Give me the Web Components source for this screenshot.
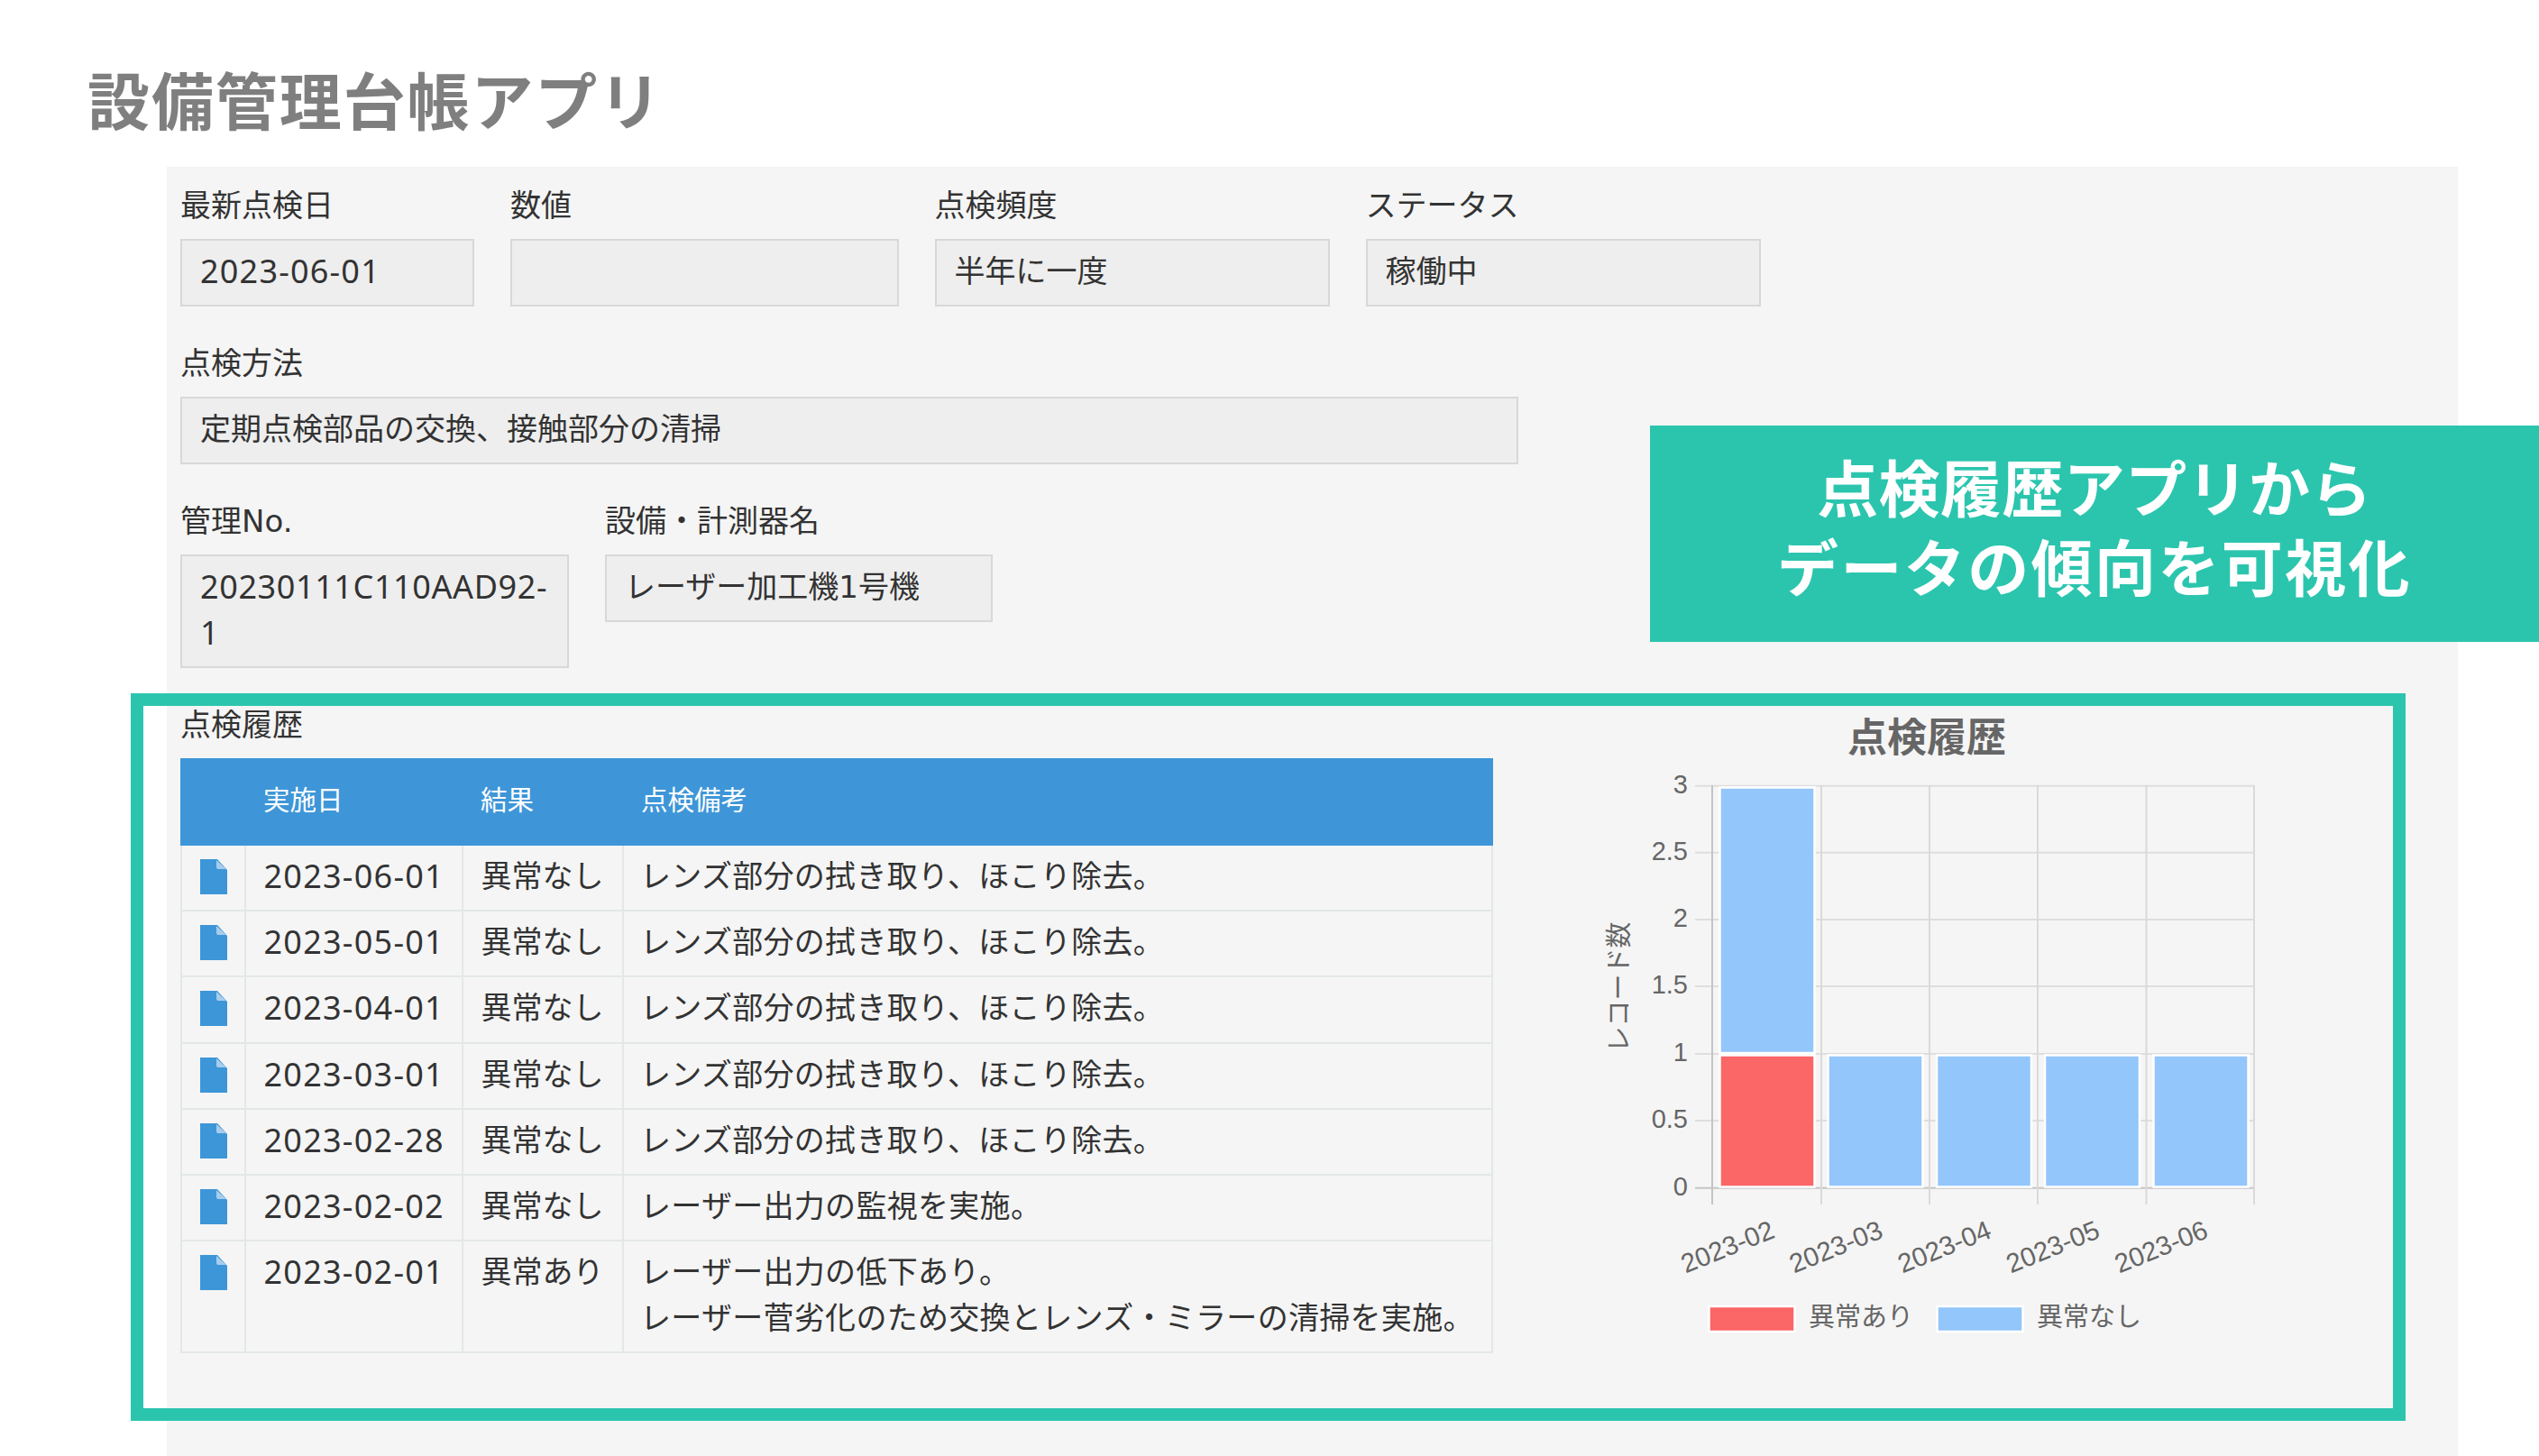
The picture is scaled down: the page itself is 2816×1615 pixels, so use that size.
<!DOCTYPE html>
<html lang="ja">
<head>
<meta charset="utf-8">
<title>設備管理台帳アプリ</title>
<style>
html,body{margin:0;padding:0;background:#fff;}
body{width:2816px;height:1615px;overflow:hidden;position:relative;font-family:"DejaVu Sans","Noto Sans CJK JP",sans-serif;color:#333;}
</style>
</head>
<body>
<app-title>設備管理台帳アプリ</app-title>
<form-panel>
  <field-row>
    <form-field latin style="--w:326px;--ls:1.2px" label="最新点検日">2023-06-01</form-field>
    <form-field label="数値" style="--w:430.5px"></form-field>
    <form-field label="点検頻度" style="--w:438px">半年に一度</form-field>
    <form-field label="ステータス" style="--w:438px">稼働中</form-field>
  </field-row>
  <field-row>
    <form-field label="点検方法" style="--w:1484px">定期点検部品の交換、接触部分の清掃</form-field>
  </field-row>
  <field-row>
    <form-field latin label="管理No." style="--w:431px">20230111C110AAD92-<br>1</form-field>
    <form-field label="設備・計測器名" style="--w:430px">レーザー加工機1号機</form-field>
  </field-row>
  <history-section>
    <history-table label="点検履歴">
      <history-row date="2023-06-01" result="異常なし">レンズ部分の拭き取り、ほこり除去。</history-row>
      <history-row date="2023-05-01" result="異常なし">レンズ部分の拭き取り、ほこり除去。</history-row>
      <history-row date="2023-04-01" result="異常なし">レンズ部分の拭き取り、ほこり除去。</history-row>
      <history-row date="2023-03-01" result="異常なし">レンズ部分の拭き取り、ほこり除去。</history-row>
      <history-row date="2023-02-28" result="異常なし">レンズ部分の拭き取り、ほこり除去。</history-row>
      <history-row date="2023-02-02" result="異常なし">レーザー出力の監視を実施。</history-row>
      <history-row date="2023-02-01" result="異常あり">レーザー出力の低下あり。<br>レーザー菅劣化のため交換とレンズ・ミラーの清掃を実施。</history-row>
    </history-table>
    <history-chart></history-chart>
  </history-section>
</form-panel>
<highlight-frame></highlight-frame>
<callout-banner><span class="a">点検履歴アプリから</span><br><span class="b">データの傾向を可視化</span></callout-banner>
<script>
const define=(name,css,html,init)=>{
  customElements.define(name,class extends HTMLElement{
    constructor(){super();const r=this.attachShadow({mode:'open'});
      r.innerHTML='<style>'+css+'</style>'+(typeof html==='function'?html(this):html);}
    connectedCallback(){
      if(init)init(this);
    }
  });
};

define('app-title',
 `:host{display:block;height:185px;box-sizing:border-box;padding:74px 0 0 97px;}
  h1{margin:0;font:700 69px/70px "Noto Sans CJK JP",sans-serif;letter-spacing:1.9px;color:#7f7f7f;white-space:nowrap;}`,
 `<h1><slot></slot></h1>`);

define('form-panel',
 `:host{display:block;box-sizing:border-box;margin-left:185px;width:2541px;height:1430px;background:#f5f5f5;padding:24px 15px 0;}`,
 `<slot></slot>`);

define('field-row',
 `:host{display:flex;gap:40px;align-items:flex-start;margin-bottom:44px;}`,
 `<slot></slot>`);

define('form-field',
 `:host{display:block;width:var(--w);flex:none;}
  .l{font-size:34px;line-height:38px;height:38px;margin-bottom:18px;color:#333;white-space:nowrap;}
  .v{box-sizing:border-box;min-height:75px;background:#eee;border:2px solid #d8d8d8;padding:8.5px 20px 11.5px;font-size:34px;line-height:51px;color:#333;white-space:nowrap;}
  :host([latin]) .v{font-family:"Noto Sans",sans-serif;font-size:36px;letter-spacing:var(--ls,.6px);padding-top:7.5px;padding-bottom:12.5px;}`,
 el=>`<div class="l" id="l"></div><div class="v"><slot></slot></div>`,
 el=>{el.shadowRoot.getElementById('l').textContent=el.getAttribute('label');});

define('history-section',
 `:host{display:flex;align-items:flex-start;}`,
 `<slot></slot>`);

define('history-table',
 `:host{display:block;width:1456px;flex:none;}
  .l{font-size:34px;line-height:38px;height:38px;margin-bottom:18px;color:#333;}
  .h{display:grid;grid-template-columns:73px 241px 178px 964px;background:#3e96d8;color:#fff;height:97px;font-size:29.5px;line-height:94px;}
  .h span{padding-left:19px;white-space:nowrap;}
  .h span:first-child{padding:0;}`,
 `<div class="l" id="l"></div>
  <div class="h"><span></span><span>実施日</span><span>結果</span><span>点検備考</span></div>
  <slot></slot>`,
 el=>{el.shadowRoot.getElementById('l').textContent=el.getAttribute('label');});

define('history-row',
 `:host{display:grid;grid-template-columns:71px 241px 178px 964px;border-left:2px solid #e3e7e8;border-bottom:2px solid #e3e7e8;font-size:34px;line-height:51px;color:#333;}
  .c{box-sizing:border-box;border-right:2px solid #e3e7e8;padding:9px 0 11.2px 19.5px;white-space:nowrap;}
  .n{letter-spacing:.3px;padding-left:18px;}
  .d{font-family:"Noto Sans",sans-serif;font-size:36px;letter-spacing:1.25px;padding-top:8px;padding-bottom:12.2px;}
  .i{padding:15px 0 0 20px;}
  svg{display:block;}`,
 el=>`<div class="c i"><svg width="30" height="39" viewBox="0 0 30 39"><path d="M0 0H19L30 12V39H0Z" fill="#3d96d8"/><path d="M18 1V9Q18 11 20 11H29Z" fill="#a8cdec"/></svg></div>
  <div class="c d" id="d"></div><div class="c" id="r"></div><div class="c n"><slot></slot></div>`,
 el=>{const s=el.shadowRoot;s.getElementById('d').textContent=el.getAttribute('date');s.getElementById('r').textContent=el.getAttribute('result');});

function chartSvg(){
  const xs=[1899,2020,2140,2260,2380.5,2500];
  const ys=[['3',872.7],['2.5',946.7],['2',1021],['1.5',1095],['1',1170],['0.5',1244],['0',1318.7]];
  let g='';
  ys.forEach(([t,y])=>{
    g+=`<line x1="1880" x2="2500" y1="${y}" y2="${y}" stroke="${t==='0'?'#c4c4c4':'#dedede'}" stroke-width="2"/>`;
    g+=`<text x="1872" y="${y+8}" text-anchor="end" class="t">${t}</text>`;
  });
  xs.forEach((x,i)=>{
    g+=`<line x1="${x}" x2="${x}" y1="872" y2="1337" stroke="${i===0?'#c4c4c4':'#dadada'}" stroke-width="2"/>`;
  });
  const bar=(x,y,h,f)=>`<rect x="${x}" y="${y}" width="105" height="${h}" fill="${f}" stroke="#fff" stroke-width="2.5"/>`;
  g+=bar(1907.5,874.5,294.5,'#93c6fb');
  g+=bar(1907.5,1171.5,146,'#fb6667');
  [2027.5,2148,2268,2388.5].forEach(x=>g+=bar(x,1171.5,146,'#93c6fb'));
  ['2023-02','2023-03','2023-04','2023-05','2023-06'].forEach((t,i)=>{
    const x=1970+i*120.2,y=1373;
    g+=`<text x="${x}" y="${y}" text-anchor="end" class="x" transform="rotate(-22 ${x} ${y})">${t}</text>`;
  });
  g+=`<text x="2137" y="835" text-anchor="middle" class="title">点検履歴</text>`;
  g+=`<text transform="translate(1806 1096) rotate(-90)" text-anchor="middle" class="ay">レコード数</text>`;
  g+=`<rect x="1895.5" y="1450" width="95" height="28" fill="#fb6667" stroke="#fff" stroke-width="2.5"/>`;
  g+=`<text x="2006" y="1472" class="a">異常あり</text>`;
  g+=`<rect x="2148.5" y="1450" width="95" height="28" fill="#93c6fb" stroke="#fff" stroke-width="2.5"/>`;
  g+=`<text x="2259" y="1472" class="a">異常なし</text>`;
  return `<svg width="800" height="730" viewBox="1760 786 800 730" role="img">${g}</svg>`;
}
define('history-chart',
 `:host{display:block;flex:none;width:800px;height:730px;margin-left:104px;}
  svg{display:block;overflow:visible;}
  .t{font:29px "Liberation Sans",sans-serif;fill:#666;}
  .x{font:29.5px "Liberation Sans",sans-serif;fill:#666;}
  .a{font:29px "Liberation Sans","Noto Sans CJK JP",sans-serif;fill:#666;}
  .ay{font:29px "Liberation Sans","Noto Sans CJK JP",sans-serif;fill:#666;}
  .title{font:700 44px "Liberation Sans","Noto Sans CJK JP",sans-serif;fill:#666;}`,
 chartSvg());

define('highlight-frame',
 `:host{display:block;position:absolute;left:145px;top:769px;width:2523px;height:807px;box-sizing:border-box;border:14px solid #2bc5ae;pointer-events:none;}`,
 ``);

define('callout-banner',
 `:host{display:flex;align-items:center;justify-content:center;position:absolute;left:1830px;top:472px;width:986px;height:239.5px;box-sizing:border-box;padding-bottom:7px;background:#2bc5ae;color:#fff;text-align:center;font:700 68px/88px "Liberation Sans","Noto Sans CJK JP",sans-serif;}
  ::slotted(.a){letter-spacing:.4px;}
  ::slotted(.b){letter-spacing:2.4px;}`,
 `<div><slot></slot></div>`);
</script>
</body>
</html>
